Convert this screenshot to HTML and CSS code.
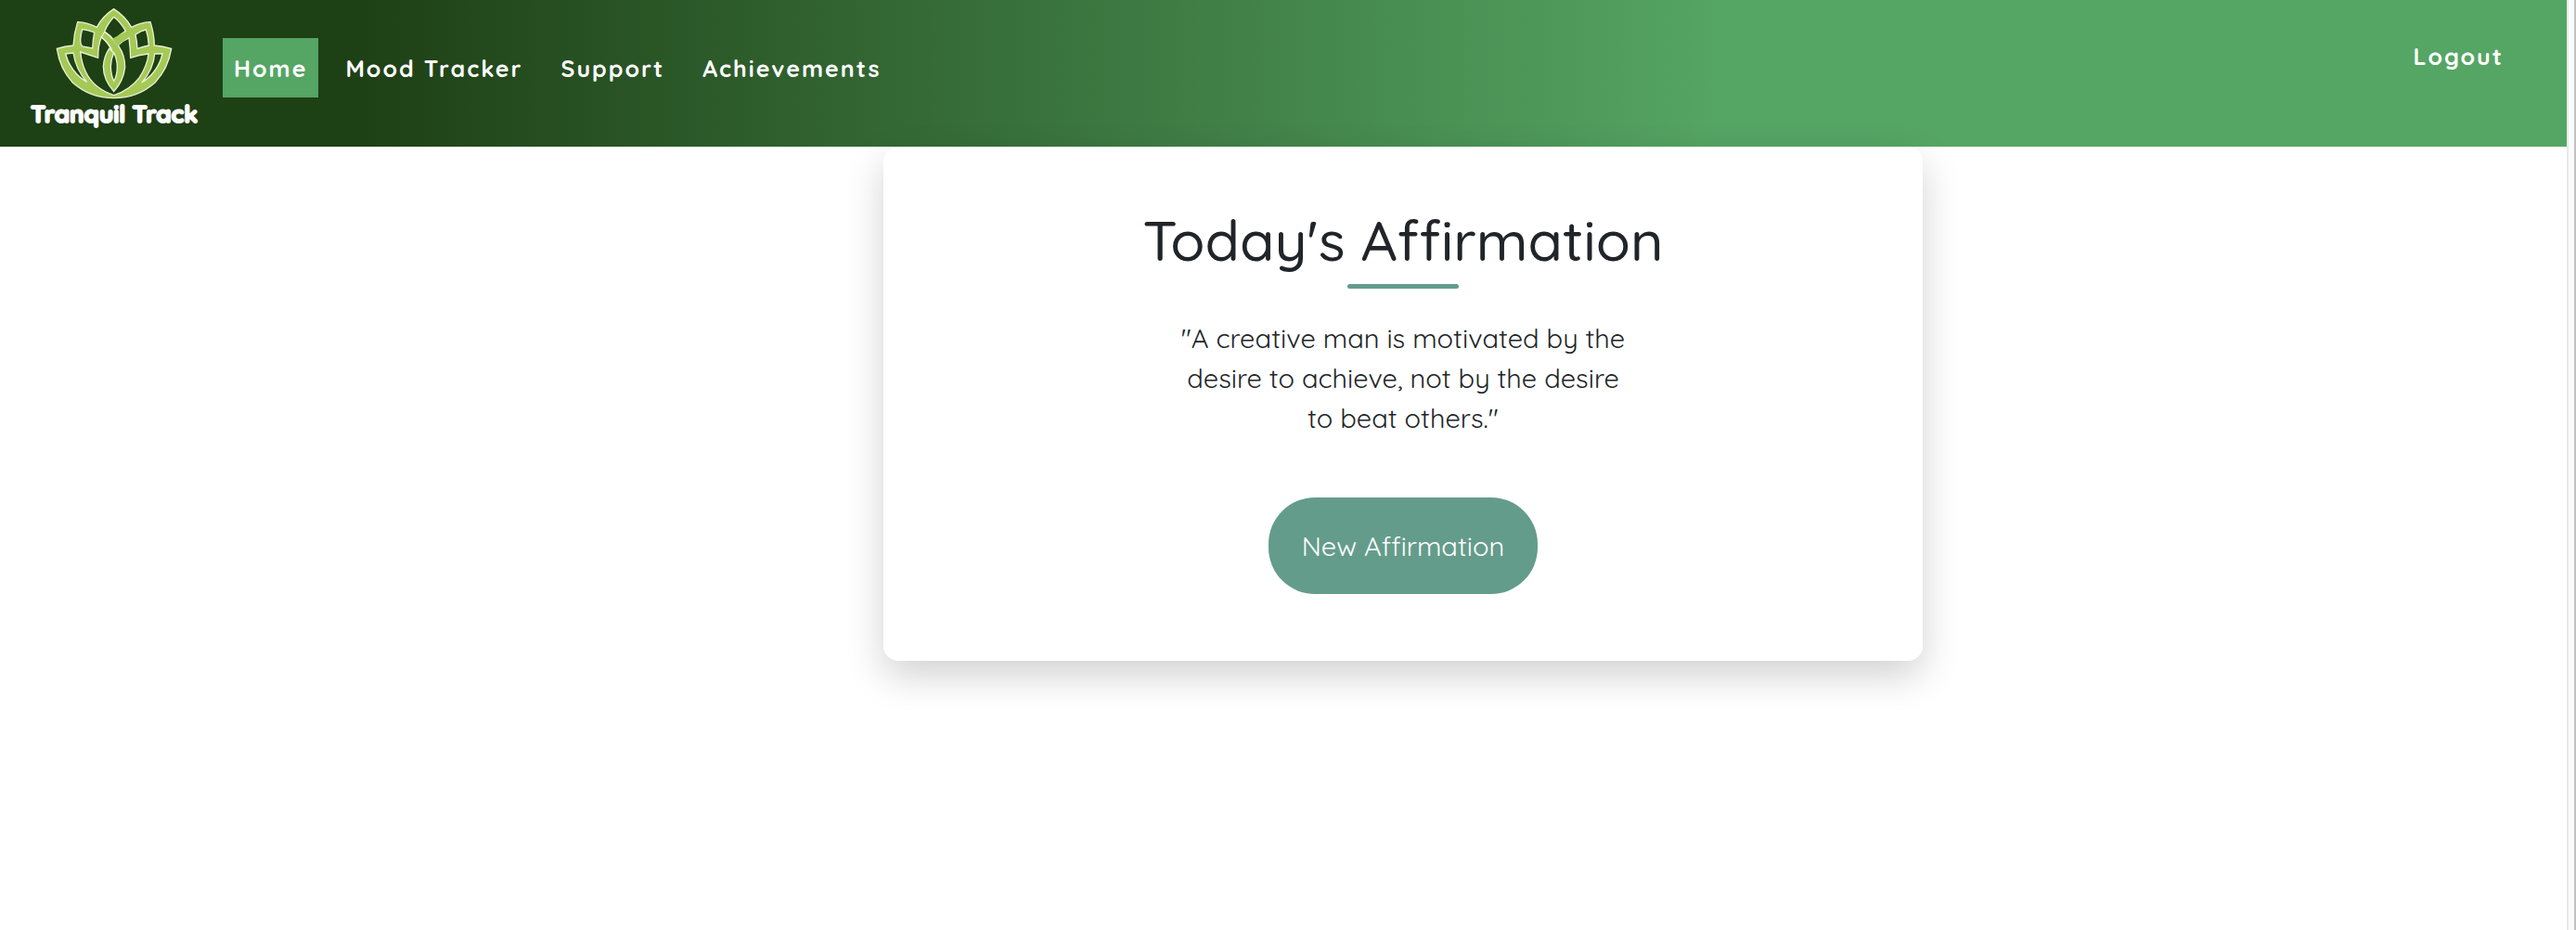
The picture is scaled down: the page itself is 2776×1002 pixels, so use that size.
FILE: index.html
```html
<!DOCTYPE html>
<html lang="en">
<head>
<meta charset="utf-8">
<title>Tranquil Track</title>
<link rel="stylesheet" href="styles.css">
</head>
<body>
<div class="page">
  <header class="navbar">
    <a class="brand" href="#" aria-label="Tranquil Track home">
      <svg class="lotus" viewBox="179 24 378 297" aria-hidden="true">
        <path class="leaf" d="M367 29Q403 52 424 88Q452 73 485 71Q497 108 498 147Q526 149 553 157Q543 221 500 267Q444 317 367 317Q290 317 234 267Q192 221 183 157Q208 149 236 147Q238 108 250 71Q283 73 312 88Q331 52 367 29Z"/>
        <path class="gap" d="M367 55Q389 72 405 100Q385 112 368 130Q354 113 337 102Q349 74 367 55Z"/>
        <path class="gap" d="M265 95Q285 97 304 105Q299 130 298 156L265 150Q258 140 259 130Q260 111 265 95Z"/>
        <path class="gap" d="M437 112Q454 99 471 96Q479 120 480 147Q461 151 443 157Q442 135 437 112Z"/>
        <path class="gap" d="M211 174L236 171Q244 225 280 265Q228 235 211 174Z"/>
        <path class="gap" d="M499 174L524 174Q510 234 457 267Q495 225 499 174Z"/>
        <path class="gap" d="M259 168L316 187Q316 145 327 120Q350 140 358 160L380 147Q397 131 416 123Q420 155 421 187Q450 176 479 174Q476 210 450 250Q420 290 367 308Q300 285 276 232Q263 205 259 168Z"/>
        <path class="leaf" d="M352 157L362 167Q357 145 327 120L337 103Q356 115 369 132L382 148Q404 180 403 218Q398 262 367 296Q333 256 333 215Q335 182 352 157Z"/>
        <path class="join" d="M362 125L400 104L418 118L379 148Z"/>
        <path class="gap" d="M367 170Q357 193 357 215Q358 244 367 262Q378 244 378 215Q378 193 367 170Z"/>
      </svg>
      <span class="brand-name">Tranquil Track</span>
    </a>
    <nav class="menu">
      <a class="link active" href="#">Home</a>
      <a class="link" href="#">Mood Tracker</a>
      <a class="link" href="#">Support</a>
      <a class="link" href="#">Achievements</a>
    </nav>
    <a class="link logout" href="#">Logout</a>
  </header>
  <main class="content">
    <section class="card">
      <h1 class="title">Today's Affirmation</h1>
      <p class="quote">"A creative man is motivated by the desire to achieve, not by the desire to beat others."</p>
      <button class="refresh" type="button">New Affirmation</button>
    </section>
  </main>
</div>
<div class="scroll-track"></div>
</body>
</html>
```
FILE: styles.css
```css
* { box-sizing: border-box; }
body {
  margin: 0;
  display: flex;
  min-height: 100vh;
  background: #fff;
  color: #212529;
  font-family: Quicksand, Lato, sans-serif;
}
.page { flex: 1; }
.navbar {
  display: flex;
  align-items: flex-start;
  min-height: 158px;
  padding: 8px 56px 0 30px;
  background: linear-gradient(90deg, #1e4015 14%, #55a564 67%);
}
.brand {
  display: flex;
  flex-direction: column;
  align-items: center;
  width: 186px;
  text-decoration: none;
  color: #fff;
}
.lotus { width: 126px; height: 99px; stroke: #e9f2d2; stroke-width: 4px; }
.leaf { fill: #a5c957; }
.gap { fill: #1e4015; }
.join { fill: #a5c957; stroke: none; }
.brand-name {
  font-size: 26px;
  line-height: 32px;
  font-weight: 700;
  -webkit-text-stroke: 2px #fff;
  white-space: nowrap;
}
.menu { display: flex; gap: 17px; padding: 33px 0 0 24px; }
.link {
  padding: 17px 12px 15px;
  color: #fff;
  font-size: 25px;
  line-height: 32px;
  font-weight: 700;
  letter-spacing: 2px;
  text-decoration: none;
  white-space: nowrap;
}
.active { background: #55a564; }
.logout { margin: 20px 0 0 auto; }
.content { display: flex; justify-content: center; padding-left: 258px; }
.card {
  display: flex;
  flex-direction: column;
  align-items: center;
  width: 1120px;
  padding: 62px 64px 72px;
  border-radius: 16px;
  background: #fff;
  box-shadow: 0 16px 40px rgba(0, 0, 0, .18);
}
.title {
  margin: 0 0 32px;
  font-size: 61px;
  line-height: 76px;
  font-weight: 500;
}
.title::after {
  content: "";
  display: block;
  width: 120px;
  height: 5px;
  margin: 10px auto 0;
  border-radius: 3px;
  background: #649c8b;
}
.quote {
  width: 500px;
  margin: 0 0 64px;
  font-size: 29px;
  line-height: 43px;
  font-weight: 400;
  text-align: center;
}
.refresh {
  height: 104px;
  padding: 0 36px;
  border: 0;
  border-radius: 50px;
  background: #649c8b;
  color: #fff;
  font-family: inherit;
  font-size: 29px;
}
.scroll-track {
  width: 10px;
  border-left: 2px solid #e8e8e8;
  border-right: 2px solid #c1c1c1;
  background: #fafafa;
}
```
